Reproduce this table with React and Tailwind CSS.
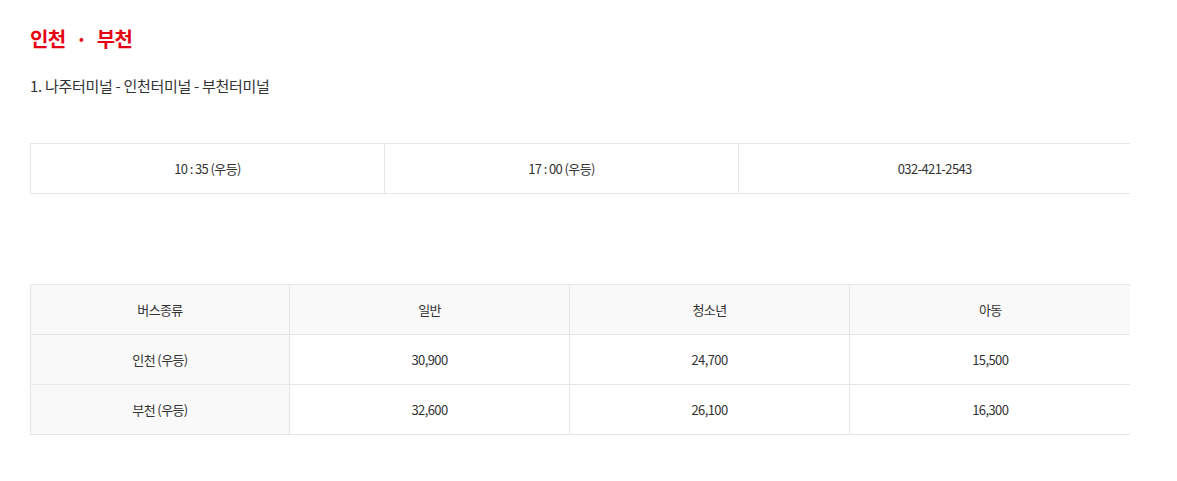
import React from 'react'

const font = { fontFamily: '"Noto Sans CJK KR", "Noto Sans", sans-serif' }

const times = ['10 : 35 (우등)', '17 : 00 (우등)', '032-421-2543']

const fares = [
    ['인천 (우등)', '30,900', '24,700', '15,500'],
    ['부천 (우등)', '32,600', '26,100', '16,300'],
]

export default function App(){
    return (
        <div className="min-h-screen bg-white pl-[30px] pt-[24px] text-[#333]" style={font}>
            <h2 className="text-[20px] font-bold leading-[30px] text-[#e60012] tracking-[-0.6px]">
                인천 <span className="mx-[6px]">·</span> 부천
            </h2>
            <p className="mt-[21px] text-[15px] leading-[22px] tracking-[-0.3px] text-[#333]">
                1. 나주터미널 - 인천터미널 - 부천터미널
            </p>

            <div className="mt-[46px] w-[1100px] overflow-hidden">
                <table className="w-[1100px] table-fixed border-collapse text-[13px] tracking-[-0.6px]">
                    <colgroup>
                        <col className="w-[354px]" />
                        <col className="w-[354px]" />
                        <col className="w-[392px]" />
                    </colgroup>
                    <tbody>
                        <tr>
                            {times.map((t, i) => (
                                <td
                                    key={i}
                                    className={`h-[50px] border-y border-l border-[#e6e6e6] text-center align-middle ${i === 2 ? 'border-r-0' : 'border-r'}`}
                                >
                                    {t}
                                </td>
                            ))}
                        </tr>
                    </tbody>
                </table>
            </div>

            <div className="mt-[90px] w-[1100px] overflow-hidden">
                <table className="w-[1100px] table-fixed border-collapse text-[13px] tracking-[-0.6px]">
                    <colgroup>
                        <col className="w-[259px]" />
                        <col className="w-[280px]" />
                        <col className="w-[280px]" />
                        <col className="w-[281px]" />
                    </colgroup>
                    <thead>
                        <tr className="bg-[#f9f9f9]">
                            {['버스종류', '일반', '청소년', '아동'].map((h, i) => (
                                <th
                                    key={h}
                                    className={`h-[50px] border-y border-l border-[#e6e6e6] font-normal text-center align-middle ${i === 3 ? 'border-r-0' : 'border-r'}`}
                                >
                                    {h}
                                </th>
                            ))}
                        </tr>
                    </thead>
                    <tbody>
                        {fares.map(row => (
                            <tr key={row[0]}>
                                {row.map((c, i) => (
                                    <td
                                        key={i}
                                        className={`h-[50px] border-y border-l border-[#e6e6e6] text-center align-middle ${i === 0 ? 'bg-[#f9f9f9]' : ''} ${i === 3 ? 'border-r-0' : 'border-r'}`}
                                    >
                                        {c}
                                    </td>
                                ))}
                            </tr>
                        ))}
                    </tbody>
                </table>
            </div>
        </div>
    )
}
